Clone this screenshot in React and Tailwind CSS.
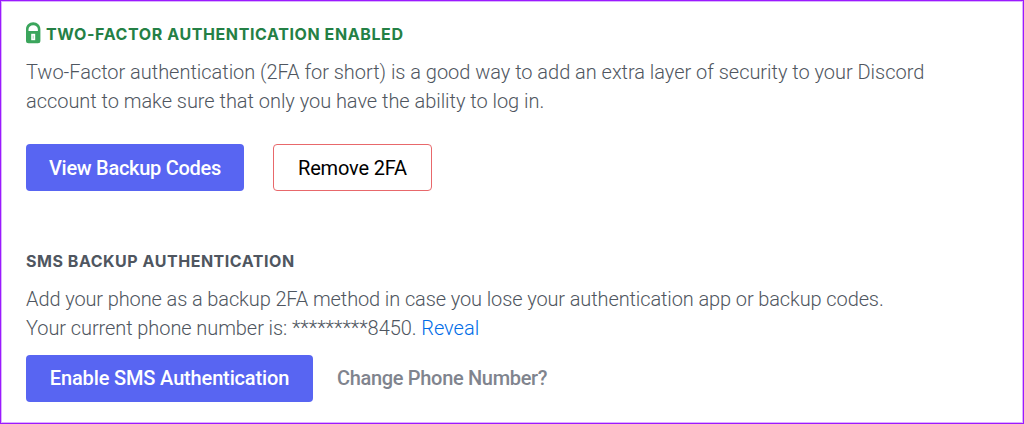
import React from "react";

function LockIcon() {
  return (
    <svg viewBox="0 0 15 22" className="h-[22px] w-[15px] shrink-0">
      <path
        fill="#3ba55c"
        fillRule="evenodd"
        d="M0 9V7.200C0 3.200 3.100.3 7.200.3s7.200 2.900 7.200 6.900V18.800a2.500 2.500 0 0 1-2.500 2.500H2.500A2.500 2.500 0 0 1 0 18.800ZM2.500 9h9.400V7.600C11.900 5 9.800 3.300 7.200 3.300S2.500 5 2.500 7.600Z"
      />
      <path fill="#ffffff" d="M5.200 11.800h4v6.400h-4Z" />
      <path fill="#3ba55c" fillOpacity="0.45" d="M6.700 13.500h1v3.200h-1Z" />
    </svg>
  );
}

function App() {
  return (
    <div className="h-[424px] w-[1024px] border border-[#9b1aff] bg-white font-['Roboto',sans-serif]">
      <div className="h-full border border-[#dcb0ff] px-6 pt-5 text-[20px] leading-[29px] font-light whitespace-nowrap text-[#4f5660]">
        <div className="flex h-6 items-center">
          <div className="-mt-[3px]">
            <LockIcon />
          </div>
          <h2 className="ml-[5px] font-['Inter',sans-serif] text-[16px] leading-6 font-bold tracking-[0.6px] text-[#248045]">
            TWO-FACTOR AUTHENTICATION ENABLED
          </h2>
        </div>
        <p className="mt-3">
          <span className="tracking-[-0.03px]">
            Two-Factor authentication (2FA for short) is a good way to add an
            extra layer of security to your Discord
          </span>
          <br />
          <span className="tracking-[-0.04px]">
            account to make sure that only you have the ability to log in.
          </span>
        </p>

        <div className="mt-[28px] flex gap-[29px] text-[20px] font-medium">
          <button className="h-[47px] w-[218px] rounded-[4px] bg-[#5865f2] pt-px tracking-[-0.28px] text-white">
            View Backup Codes
          </button>
          <button className="h-[47px] w-[159px] rounded-[4px] border border-[#e8686b] pt-px font-normal tracking-[-0.15px] text-black">
            Remove 2FA
          </button>
        </div>

        <h2 className="mt-[58px] font-['Inter',sans-serif] text-[16px] leading-6 font-bold tracking-[0.53px] text-[#4f5660]">
          SMS BACKUP AUTHENTICATION
        </h2>
        <p className="mt-[12px]">
          <span className="tracking-[-0.115px]">
            Add your phone as a backup 2FA method in case you lose your
            authentication app or backup codes.
          </span>
          <br />
          <span className="tracking-[-0.08px]">
            Your current phone number is: *********8450.{" "}
          </span>
          <a className="text-[#006ce7]">Reveal</a>
        </p>
        <div className="mt-[12px] flex items-center gap-6 font-medium">
          <button className="h-[47px] w-[287px] rounded-[4px] bg-[#5865f2] tracking-[-0.15px] text-white">
            Enable SMS Authentication
          </button>
          <button className="tracking-[-0.32px] text-[#80848e]">
            Change Phone Number?
          </button>
        </div>
      </div>
    </div>
  );
}

export default App;
